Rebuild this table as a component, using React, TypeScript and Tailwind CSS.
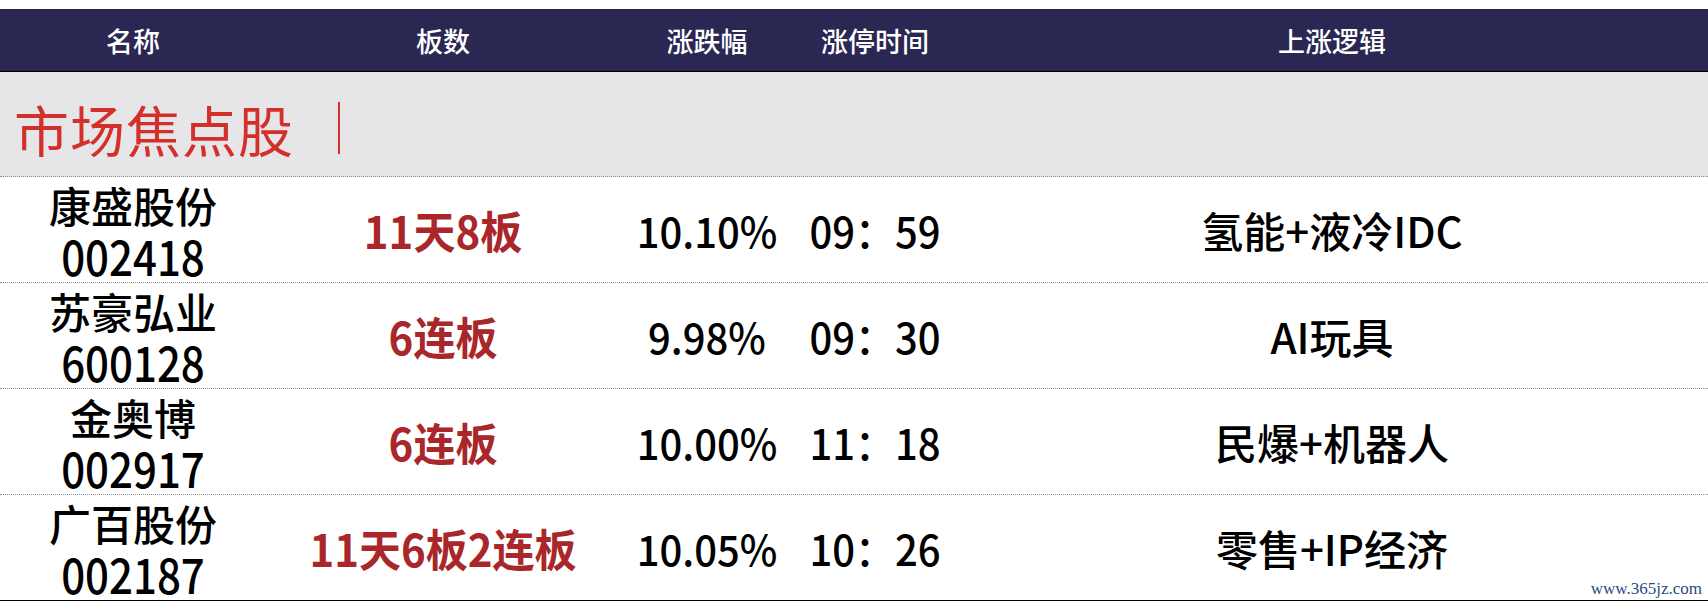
import React from 'react';

const CJK = "font-['Noto_Sans_CJK_SC','Noto_Sans',sans-serif]";

interface StockRow {
  name: string;
  code: string;
  boards: string;
  change: string;
  time: string;
  logic: string;
}

const ROWS: StockRow[] = [
  { name: '康盛股份', code: '002418', boards: '11天8板', change: '10.10%', time: '09：59', logic: '氢能+液冷IDC' },
  { name: '苏豪弘业', code: '600128', boards: '6连板', change: '9.98%', time: '09：30', logic: 'AI玩具' },
  { name: '金奥博', code: '002917', boards: '6连板', change: '10.00%', time: '11：18', logic: '民爆+机器人' },
  { name: '广百股份', code: '002187', boards: '11天6板2连板', change: '10.05%', time: '10：26', logic: '零售+IP经济' },
];

const COLS = 'grid grid-cols-[266px_354px_174px_162px_1fr]';

export default function App() {
  return (
    <div className={`w-[1708px] h-[603px] bg-white pt-[9px] relative overflow-hidden ${CJK}`}>
      {/* header */}
      <div className={`${COLS} h-[63px] bg-[#2a2852] border-t border-[#23213f] border-b border-b-black items-center text-white text-[27px] leading-none font-medium`}>
        <div className="text-center">名称</div>
        <div className="text-center">板数</div>
        <div className="text-center">涨跌幅</div>
        <div className="text-center">涨停时间</div>
        <div className="text-center">上涨逻辑</div>
      </div>

      {/* section title */}
      <div className="h-[105px] bg-[#e6e6e8] flex items-center pl-[14px] pt-[8px] border-b border-dotted border-[#8c8c8c]">
        <span className="text-[55px] leading-none text-[#d3302b] tracking-[1px]">市场焦点股</span>
        <span className="ml-[44px] w-[2px] h-[52px] bg-[#d3302b]" />
      </div>

      {/* rows */}
      {ROWS.map((r, i) => (
        <div
          key={r.code}
          className={`${COLS} h-[106px] items-center border-b ${
            i === ROWS.length - 1 ? 'border-solid border-black' : 'border-dotted border-[#8c8c8c]'
          }`}
        >
          <div className="flex flex-col items-center text-[42px] leading-[50px] font-medium text-black">
            <span>{r.name}</span>
            <span className="scale-y-[1.15]">{r.code}</span>
          </div>
          <div className="text-center text-[42px] leading-none font-bold text-[#a9272a] scale-y-[1.06]">{r.boards}</div>
          <div className="text-center text-[40px] leading-none font-medium text-black scale-y-[1.06]">{r.change}</div>
          <div className="text-center text-[40px] leading-none font-medium text-black scale-y-[1.06]">{r.time}</div>
          <div className="text-center text-[42px] leading-none font-medium text-black">{r.logic}</div>
        </div>
      ))}

      <span className="absolute right-[6px] bottom-[6px] text-[17px] leading-none text-[#2b4a85] font-['Liberation_Serif',serif]">
        www.365jz.com
      </span>
    </div>
  );
}
